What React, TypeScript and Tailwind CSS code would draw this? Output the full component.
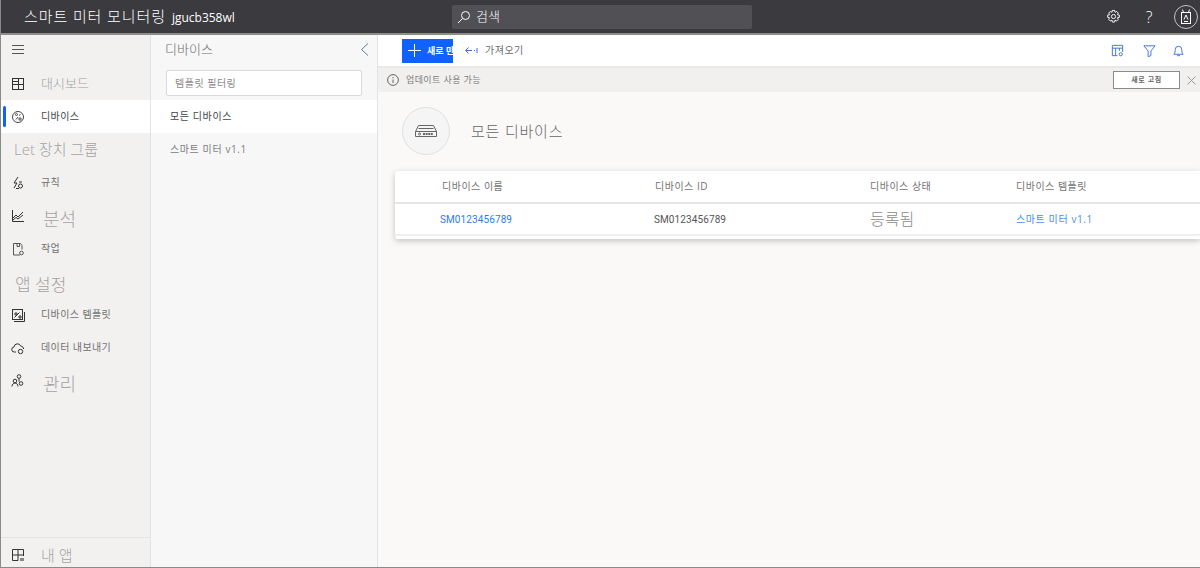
import type { ReactNode } from 'react';

const font = { fontFamily: '"Segoe UI", "Open Sans", "Noto Sans CJK KR", sans-serif' };

function Ico({ children, className = 'text-[#333]', size = 16 }: { children: ReactNode; className?: string; size?: number }) {
  return (
    <svg width={size} height={size} viewBox="0 0 16 16" fill="none" stroke="currentColor" strokeWidth="1" className={`shrink-0 ${className}`}>
      {children}
    </svg>
  );
}

const DashboardIcon = () => (
  <Ico>
    <rect x="2.5" y="2.5" width="11" height="11" />
    <path d="M2.5 8.500h11M8.500 2.500v11M2.500 5.500h6" />
  </Ico>
);
const DeviceIcon = () => (
  <Ico className="text-[#444]">
    <circle cx="8" cy="8" r="5.500" />
    <circle cx="6.500" cy="5.500" r="1" />
    <circle cx="10" cy="10" r="1.200" />
    <path d="M6 10.500l2-2.500M9 6.500l1.500-1" />
  </Ico>
);
const RuleIcon = () => (
  <Ico>
    <path d="M8 2L4 8h3l-3 5M9 7h3" />
    <circle cx="10.500" cy="11" r="2" />
    <path d="M6 13.500h3" />
  </Ico>
);
const ChartIcon = () => (
  <Ico>
    <path d="M2.500 2v11.500H14" />
    <path d="M3 10l3-3 2 2 5-5" />
    <path d="M3 12l3-2.500 2 1.500 5-4" />
  </Ico>
);
const JobIcon = () => (
  <Ico className="text-[#555]">
    <path d="M10 14H3.500V2.500h7l1.500 2v4" />
    <path d="M7 2.500v3h2.500v-3" />
    <circle cx="11.500" cy="12" r="1.800" />
  </Ico>
);
const TemplateIcon = () => (
  <Ico>
    <rect x="2.500" y="2.500" width="10" height="10" />
    <path d="M4 14.500h10.500V5" />
    <path d="M4.500 10.500l5-5M5 6h2v2H5zM9 9h2v2H9z" />
  </Ico>
);
const CloudIcon = () => (
  <Ico>
    <path d="M6 12H4.500a2.500 2.500 0 0 1-.5-5 3.500 3.500 0 0 1 6.800-.8A2.500 2.500 0 0 1 13.500 9" />
    <circle cx="10.500" cy="11.500" r="2.200" />
  </Ico>
);
const AdminIcon = () => (
  <Ico>
    <circle cx="9" cy="3.500" r="1.800" />
    <circle cx="5" cy="8" r="1.800" />
    <circle cx="11" cy="10.500" r="1.800" />
    <path d="M2 13.500c0-2 1.300-3.500 3-3.500s3 1.500 3 3.500M9 5.500v3" />
  </Ico>
);
const MyAppIcon = () => (
  <Ico>
    <path d="M8 13.500H2.500v-11h11V9M2.500 8h11M8 2.500v11" />
    <path d="M10 11h4v3h-4z" fill="#888" stroke="none" />
  </Ico>
);

// labels in the reference come in two sizes, the big ones sit a bit low in the row
function NavRow({ icon, label, labelClass, active }: { icon?: ReactNode; label: string; labelClass?: string; active?: boolean }) {
  return (
    <div className={`relative flex h-[33px] items-center ${active ? 'bg-white' : ''}`}>
      {active && <span className="absolute left-[2px] top-[6px] h-[21px] w-[3px] rounded-sm bg-[#0f62fe]" />}
      {icon ? <span className="ml-[9px] flex w-[31px]">{icon}</span> : <span className="ml-[13px]" />}
      <span className={labelClass ?? `text-[10px] tracking-[0.4px] ${active ? 'text-[#444]' : 'text-[#707070]'}`}>{label}</span>
    </div>
  );
}

function Sidebar() {
  return (
    <aside className="flex w-[150px] shrink-0 flex-col border-r border-[#e3e3e3] bg-[#f2f1f0]">
      <div className="flex h-[32px] items-center pb-[3px] pl-[11px]">
        <svg width="12" height="9" viewBox="0 0 12 9" stroke="#555" strokeWidth="1"><path d="M0 .5h12M0 4.500h12M0 8.500h12" /></svg>
      </div>
      <NavRow icon={<DashboardIcon />} label="대시보드" labelClass="text-[13px] font-light text-[#a3a3a3]" />
      <NavRow icon={<DeviceIcon />} label="디바이스" active />
      <NavRow label="Let 장치 그룹" labelClass="text-[15px] font-light text-[#a3a3a3]" />
      <NavRow icon={<RuleIcon />} label="규칙" />
      <NavRow icon={<ChartIcon />} label="분석" labelClass="pl-[2px] pt-[7px] text-[18px] font-light text-[#a3a3a3]" />
      <NavRow icon={<JobIcon />} label="작업" />
      <NavRow label="앱 설정" labelClass="pl-[1px] pt-[7px] text-[17px] font-light text-[#a3a3a3]" />
      <NavRow icon={<TemplateIcon />} label="디바이스 템플릿" />
      <NavRow icon={<CloudIcon />} label="데이터 내보내기" />
      <NavRow icon={<AdminIcon />} label="관리" labelClass="pl-[2px] pt-[8px] text-[18px] font-light text-[#a3a3a3]" />
      <div className="mt-auto flex h-[30px] items-center border-t border-[#e3e3e3] pt-[4px]">
        <span className="ml-[9px] flex w-[31px]"><MyAppIcon /></span>
        <span className="pt-[2px] text-[15px] font-light text-[#a3a3a3]">내 앱</span>
      </div>
    </aside>
  );
}

function DevicePanel() {
  return (
    <section className="flex w-[227px] shrink-0 flex-col border-r border-[#e3e3e3] bg-[#f7f7f7]">
      <div className="flex h-[35px] items-center justify-between pb-[6px] pl-[14px] pr-[8px]">
        <span className="text-[13px] font-light text-[#6e6e6e]">디바이스</span>
        <svg width="9" height="13" viewBox="0 0 9 13" fill="none" stroke="#5f7896" strokeWidth="1"><path d="M8 .5L1.500 6.500 8 12.500" /></svg>
      </div>
      <div className="mx-[15px] flex h-[26px] items-center rounded-[2px] border border-[#d9d9d9] bg-white pl-[8px] text-[10px] tracking-[0.5px] text-[#8a8a8a]">
        템플릿 필터링
      </div>
      <div className="mt-[4px] flex h-[33px] items-center bg-white pl-[19px] text-[10px] tracking-[0.6px] text-[#444]">모든 디바이스</div>
      <div className="flex h-[33px] items-center pl-[19px] text-[10px] tracking-[0.6px] text-[#808080]">스마트 미터 v1.1</div>
    </section>
  );
}

function Toolbar() {
  return (
    <div className="flex h-[33px] items-center border-b-2 border-[#e8e8e8] bg-white pl-[24px] pr-[14px]">
      <div className="flex h-[24px] w-[51px] items-center overflow-hidden whitespace-nowrap bg-[#0f62fe] pl-[6px] text-white">
        <svg width="13" height="13" viewBox="0 0 13 13" stroke="#fff" strokeWidth="1" className="shrink-0"><path d="M6.500 0v13M0 6.500h13" /></svg>
        <span className="ml-[6px] text-[9px] font-bold">새로 만</span>
      </div>
      <svg width="13" height="7" viewBox="0 0 13 7" fill="none" stroke="#3f6fd8" strokeWidth="1" className="ml-[12px] shrink-0"><path d="M3.500.5L.5 3.500l3 3M1 3.500h6M9 3.500h1M12 1v5" /></svg>
      <span className="ml-[7px] text-[10px] tracking-[0.5px] text-[#6b6b6b]">가져오기</span>
      <div className="ml-auto flex items-center gap-[14px]">
        <Ico className="mr-[3px] text-[#3f6fd8]" size={15}>
          <path d="M2.500 13.500v-11h11v7M2.500 5.500h11M6 5.500v8M10 5.500v3M2.500 13.500H8" />
          <circle cx="11.500" cy="12" r="1.700" />
        </Ico>
        <Ico className="text-[#3f6fd8]" size={15}><path d="M2 3h12l-4.500 5.500v5l-3 1v-6z" /></Ico>
        <Ico className="text-[#3f6fd8]" size={15}>
          <path d="M3 12c1.500-1.500 1.500-3 1.500-5a3.500 3.500 0 0 1 7 0c0 2 0 3.500 1.500 5zM6.500 13.500h3" />
        </Ico>
      </div>
    </div>
  );
}

function UpdateBar() {
  return (
    <div className="flex h-[24px] items-center bg-[#f1f0ee] pl-[9px] pr-[4px]">
      <svg width="12" height="12" viewBox="0 0 12 12" fill="none" stroke="#666" strokeWidth="1" className="shrink-0">
        <circle cx="6" cy="6" r="5.400" />
        <path d="M6 5.500V9M6 3v1.200" />
      </svg>
      <span className="ml-[7px] text-[9px] tracking-[0.4px] text-[#7c7c7c]">업데이트 사용 가능</span>
      <div className="ml-auto flex h-[18px] w-[67px] items-center justify-center border border-[#8a8a8a] bg-white text-[7px] font-bold tracking-[0.6px] text-[#666]">
        새로 고침
      </div>
      <svg width="9" height="9" viewBox="0 0 9 9" stroke="#999" strokeWidth="1" className="ml-[7px] shrink-0"><path d="M.5.500l8 8M8.500.500l-8 8" /></svg>
    </div>
  );
}

function DeviceTable() {
  return (
    <div className="ml-[17px] mt-[16px] rounded-l-[3px] bg-white pb-[3px] shadow-[0_2px_6px_rgba(0,0,0,0.22)]">
      <div className="grid h-[33px] grid-cols-[259px_216px_146px_1fr] items-center border-b-2 border-[#e6e6e6] text-[10px] tracking-[0.5px] text-[#737373]">
        <span className="pl-[47px]">디바이스 이름</span>
        <span className="pl-[1px]">디바이스 ID</span>
        <span>디바이스 상태</span>
        <span>디바이스 템플릿</span>
      </div>
      <div className="grid h-[32px] grid-cols-[259px_216px_146px_1fr] items-center border-b-2 border-[#efefef] text-[10px]">
        <span className="pl-[45px] font-['Roboto'] tracking-[0.1px] text-[#2f7bea]">SM0123456789</span>
        <span className="font-['Roboto'] tracking-[0.1px] text-[#555]">SM0123456789</span>
        <span className="text-[16px] font-light text-[#8a8a8a]">등록됨</span>
        <span className="text-[10px] tracking-[0.6px] text-[#4d8df0]">스마트 미터 v1.1</span>
      </div>
    </div>
  );
}

export default function App() {
  return (
    <div className="flex h-[568px] w-[1200px] flex-col overflow-hidden border-b border-l border-[#8a8a8a] text-[#333]" style={font}>
      <header className="grid h-[35px] shrink-0 grid-cols-[451px_300px_1fr] items-center border-b-2 border-[#8c8c8c] bg-[#3b3a3e] text-white">
        <div className="flex items-baseline pl-[23px] text-[15px] font-light">
          <span className="tracking-[0.9px]">스마트 미터 모니터링</span>
          <span className="ml-[6px] text-[12px] font-normal">jgucb358wl</span>
        </div>
        <div className="flex h-[24px] items-center rounded-[2px] bg-[#515054] pl-[5px]">
          <svg width="14" height="14" viewBox="0 0 14 14" fill="none" stroke="#fff" strokeWidth="1"><circle cx="8.500" cy="5.500" r="4" /><path d="M5.500 8.500L1 13" /></svg>
          <span className="ml-[5px] text-[13px] font-light">검색</span>
        </div>
        <div className="flex items-center justify-end gap-[19px] pr-[2px]">
          <span className="mr-[3px] flex">
            <Ico className="text-white" size={15}>
              <circle cx="8" cy="8" r="2.200" />
              <path d="M6.800 1.500h2.400l.4 2 1.800-.9 1.700 1.700-.9 1.800 2 .4v2.400l-2 .4.900 1.800-1.700 1.700-1.800-.9-.4 2H6.800l-.4-2-1.800.9-1.700-1.700.9-1.800-2-.4V6.500l2-.4-.9-1.800 1.700-1.700 1.800.9z" />
            </Ico>
          </span>
          <span className="w-[12px] text-center text-[16px] font-light leading-none">?</span>
          <div className="flex h-[24px] w-[24px] items-center justify-center rounded-full border border-[#c4c4c4]">
            <svg width="12" height="16" viewBox="0 0 12 16" fill="none" stroke="#fff" strokeWidth="1">
              <rect x="1.500" y="3.500" width="9" height="11" />
              <path d="M3.500 3.500l-1-3M8.500 3.500l1-3M4 12.500h4M6 6l-2 4.500M6 6l2 4.500" />
            </svg>
          </div>
        </div>
      </header>
      <div className="flex min-h-0 flex-1">
        <Sidebar />
        <DevicePanel />
        <main className="min-w-0 flex-1 bg-[#faf9f8]">
          <Toolbar />
          <UpdateBar />
          <div className="flex items-center pl-[24px] pt-[15px]">
            <div className="flex h-[48px] w-[48px] items-center justify-center rounded-full border border-[#e1e1e1] bg-[#f5f5f5]">
              <svg width="22" height="12" viewBox="0 0 22 12" fill="none" stroke="#666" strokeWidth="1">
                <path d="M.5 6.500l3-6h15l3 6v5H.5zM.5 6.500h21" />
                <path d="M3.500 3.500h15" />
                <path d="M8 9h10" strokeWidth="2" strokeDasharray="2 .6" />
                <circle cx="4.500" cy="9" r="1" />
              </svg>
            </div>
            <h1 className="ml-[21px] text-[15px] font-light tracking-[0.8px] text-[#666]">모든 디바이스</h1>
          </div>
          <DeviceTable />
        </main>
      </div>
    </div>
  );
}
